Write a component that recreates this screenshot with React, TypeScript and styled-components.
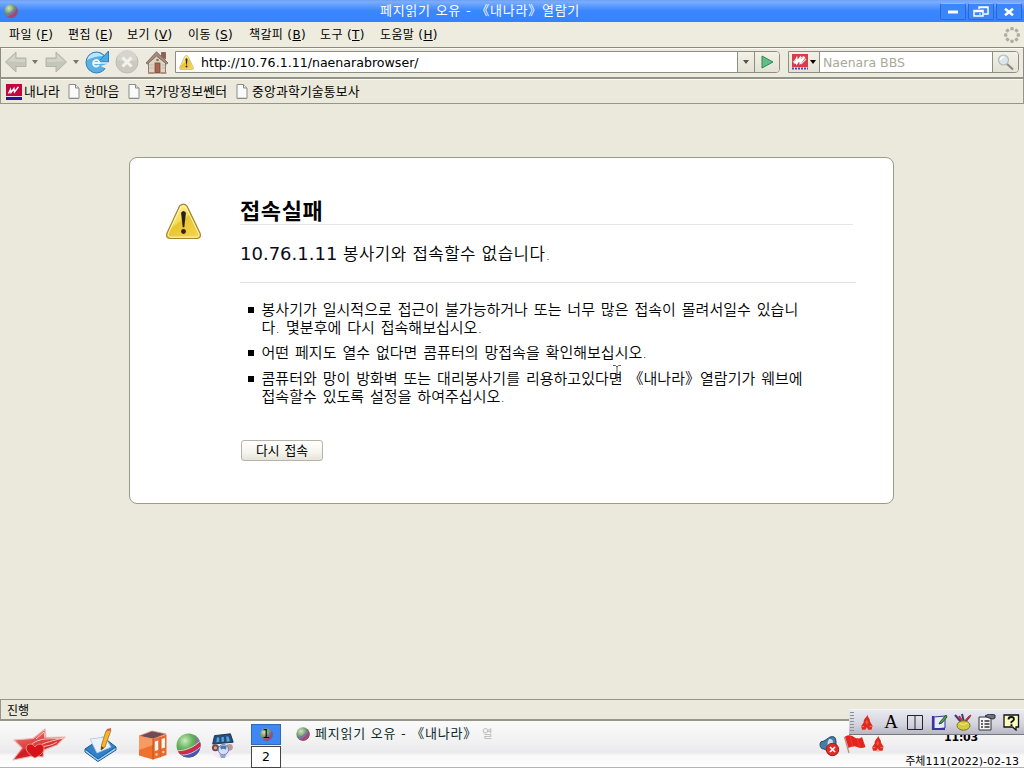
import React from "react";
import styled, { createGlobalStyle } from "styled-components";

const Global = createGlobalStyle`
  * { box-sizing: border-box; }
  body { margin: 0; overflow: hidden; }
  svg { display: block; flex: none; }
`;

const sans = `"DejaVu Sans", "Noto Sans CJK KR", sans-serif`;

const Screen = styled.div`
  position: relative;
  width: 1024px;
  height: 768px;
  display: flex;
  flex-direction: column;
  background: #ebe9db;
  color: #000;
  font: 12px/1 ${sans};
  white-space: pre;
  overflow: hidden;
`;

const Label = styled.span<{ $size?: number; $ls?: number; $ws?: number }>`
  font-size: ${(p) => p.$size ?? 12}px;
  letter-spacing: ${(p) => p.$ls ?? 0}px;
  word-spacing: ${(p) => p.$ws ?? 0}px;
  line-height: 18px;
`;

/* Title bar */
const TitleBar = styled.header`
  height: 22px;
  flex: none;
  display: grid;
  grid-template-columns: 16px 1fr 84px;
  align-items: center;
  padding-left: 4px;
  background: linear-gradient(#6f9ff0 0, #79adff 2px, #5b9aff 6px, #3a86fd 11px, #3583fc 100%);
`;
const Title = styled.h1`
  margin: 0;
  text-align: center;
  color: #fff;
  font: 400 13px/20px ${sans};
  letter-spacing: 0.75px;
`;
const WindowButtons = styled.div`
  display: flex;
  gap: 2px;
  align-self: end;
`;
const WindowButton = styled.button`
  width: 26px;
  height: 17px;
  margin: 0 0 2px;
  padding: 0;
  display: grid;
  place-items: center;
  border: 1px solid #2a68d4;
  border-top-color: #8db8ff;
  border-radius: 2px;
  background: #3b86fb;
`;

/* Menu bar */
const MenuBar = styled.nav`
  height: 25px;
  flex: none;
  display: flex;
  align-items: center;
  padding: 1px 4px 0 9px;
  background: #eeecdf;
`;
const MenuItem = styled.span<{ $w: number }>`
  width: ${(p) => p.$w}px;
  font-size: 12px;
  line-height: 18px;
  letter-spacing: 0.35px;
`;
const Spacer = styled.div`
  flex: 1;
`;

/* Navigation toolbar */
const Toolbar = styled.div`
  height: 32px;
  flex: none;
  display: flex;
  align-items: center;
  padding: 0 4px 2px 1px;
  border: 1px solid #8c8b82;
  border-bottom: 2px solid #94938a;
  background: #edebdf;
  box-shadow: inset 0 1px #fbfaf4;
`;
const Tool = styled.div<{ $w: number }>`
  width: ${(p) => p.$w}px;
  flex: none;
  display: grid;
  place-items: center;
`;
const Field = styled.div<{ $w: number }>`
  width: ${(p) => p.$w}px;
  height: 22px;
  margin-top: 1px;
  display: flex;
  flex: none;
  border: 1px solid #8e8d82;
  border-radius: 0 4px 4px 0;
  background: #fff;
  overflow: hidden;
`;
const FieldText = styled.div<{ $muted?: boolean; $pad: number }>`
  flex: 1;
  display: flex;
  align-items: center;
  gap: 7px;
  padding: 1px 0 0 ${(p) => p.$pad}px;
  color: ${(p) => (p.$muted ? "#a9a997" : "#000")};
`;
const FieldButton = styled.div<{ $w: number; $right?: boolean }>`
  width: ${(p) => p.$w}px;
  display: flex;
  align-items: center;
  justify-content: center;
  gap: 2px;
  background: linear-gradient(#f3f1e8, #e4e2d4);
  border-left: ${(p) => (p.$right ? "0" : "1px solid #8e8d82")};
  border-right: ${(p) => (p.$right ? "1px solid #8e8d82" : "0")};
`;

/* Bookmarks bar */
const Bookmarks = styled.div`
  height: 25px;
  flex: none;
  display: flex;
  align-items: center;
  padding: 1px 5px 0;
  border: 1px solid #96958b;
  border-top: 0;
  background: #ebe9db;
  box-shadow: inset 0 1px #fbfaf4;
`;
const Bookmark = styled.div<{ $w: number; $gap?: number }>`
  width: ${(p) => p.$w}px;
  display: flex;
  align-items: center;
  gap: ${(p) => p.$gap ?? 4}px;
  ${Label} {
    padding-top: 1px;
  }
`;

/* Error page */
const Page = styled.main`
  flex: 1;
  padding: 53px 130px 0 129px;
`;
const Card = styled.section`
  height: 347px;
  display: grid;
  grid-template-columns: 110px 1fr;
  padding: 0 37px 0 0;
  border: 1px solid #9b9b8a;
  border-radius: 8px;
  background: #fff;
`;
const CardIcon = styled.div`
  padding: 45px 0 0 35px;
`;
const CardBody = styled.div`
  display: flex;
  flex-direction: column;
  align-items: flex-start;
`;
const Heading = styled.h2`
  width: 613px;
  height: 67px;
  margin: 0;
  padding-top: 36px;
  border-bottom: 1px solid #e6e6e2;
  font: 700 22px/30px "Noto Sans CJK KR", sans-serif;
  letter-spacing: 0.6px;
`;
const Summary = styled.p`
  width: 616px;
  height: 58px;
  margin: 0;
  padding-top: 16px;
  border-bottom: 1px solid #e2e2e2;
  color: #0a0a1c;
  font-size: 18px;
  line-height: 26px;
`;
const Light = styled.span`
  color: #000;
  font-size: 16.8px;
  font-weight: 350;
  letter-spacing: 0.45px;
`;
const List = styled.ul`
  margin: 0;
  padding: 18px 0 0 8px;
  list-style: none;
  display: flex;
  flex-direction: column;
`;
const Item = styled.li<{ $after?: number }>`
  display: flex;
  gap: 7.5px;
  margin-bottom: ${(p) => p.$after ?? 0}px;
  font-size: 15px;
  font-weight: 350;
  line-height: 18px;
  letter-spacing: 0.02px;
  word-spacing: 1.1px;
  &::before {
    content: "";
    width: 6px;
    height: 6px;
    margin-top: 6px;
    background: #000;
  }
`;
const Retry = styled.button`
  width: 82px;
  height: 21px;
  margin: 34px 0 0 1px;
  padding: 0;
  border: 1px solid #b4b4a8;
  border-radius: 3px;
  background: linear-gradient(#fff, #f5f4ee 60%, #e6e4d8);
  color: #000;
  font: 400 12.8px/18px ${sans};
  word-spacing: 1px;
`;

const StatusBar = styled.footer`
  height: 22px;
  flex: none;
  padding: 2px 0 0 6px;
  border: 1px solid #96958c;
  border-bottom-width: 2px;
  border-right: 0;
  background: #ebe9db;
`;

/* Desktop panel */
const Taskbar = styled.div`
  height: 47px;
  flex: none;
  display: flex;
  padding-left: 8px;
  border-bottom: 1px solid #b4b4b8;
  background: linear-gradient(#fafafa 0, #f1f1f2 45%, #eaeaec 68%, #f8f8f8 75%, #fefefe 100%);
`;
const Launcher = styled.div<{ $w: number }>`
  width: ${(p) => p.$w}px;
  padding-top: 2px;
  display: grid;
  place-items: center;
`;
const Pager = styled.div`
  width: 30px;
  margin: 3px 0 0 10px;
  display: grid;
  grid-template-rows: 21px 22px;
  gap: 1px;
`;
const Desk = styled.div<{ $active?: boolean }>`
  display: grid;
  place-items: center;
  background: ${(p) => (p.$active ? "#3f87f5" : "#fff")};
  border: 1px solid ${(p) => (p.$active ? "#3268b8" : "#444")};
  font-size: 12.5px;
`;
const Stack = styled.div`
  display: grid;
  place-items: center;
  & > * { grid-area: 1 / 1; }
`;
const Task = styled.div`
  height: 26px;
  margin-left: 15px;
  display: flex;
  align-items: center;
  gap: 5px;
  color: #0b2b2b;
`;
const Faded = styled.span`
  color: #b9b9b9;
  font-size: 11.5px;
`;
const Tray = styled.div`
  display: flex;
  align-items: flex-start;
  padding: 14px 0 0;
`;
const Clock = styled.div`
  width: 139px;
  display: flex;
  flex-direction: column;
  align-items: flex-end;
  padding: 8px 5px 0 0;
`;
const Time = styled.b`
  margin-right: 41px;
  font-size: 11px;
  line-height: 18px;
  letter-spacing: -0.2px;
`;
const DateText = styled.span`
  margin-top: 6px;
  font-size: 11px;
  line-height: 18px;
`;

const InputBar = styled.div`
  position: absolute;
  left: 849px;
  top: 709px;
  width: 175px;
  height: 26px;
  display: grid;
  grid-template-columns: 6px repeat(7, 24px);
  place-items: center;
  border-bottom: 1px solid #77777f;
  border-top: 1px solid #f4f4f6;
  background: linear-gradient(#e9e9f0, #d4d4df 60%, #b7b7c4);
`;
const Letter = styled.span`
  font: 19px/20px "Liberation Serif", serif;
`;
const Grip = styled.div`
  width: 4px;
  height: 20px;
  background: repeating-linear-gradient(#8d8d96 0 1px, transparent 1px 3px);
`;
const Cursor = styled.div`
  position: absolute;
  left: 612px;
  top: 365px;
`;

const Orb = () => (
  <svg width="25" height="25" viewBox="0 0 24 24">
    <defs>
      <radialGradient id="orbDock" cx=".35" cy=".3" r=".8">
        <stop offset="0" stopColor="#c9ecc0" />
        <stop offset=".4" stopColor="#6ab65e" />
        <stop offset="1" stopColor="#2d6e3d" />
      </radialGradient>
      <clipPath id="orbClip"><circle cx="12" cy="12" r="11.500" /></clipPath>
    </defs>
    <circle cx="12" cy="12" r="11.500" fill="url(#orbDock)" />
    <g clipPath="url(#orbClip)">
      <path d="M15 -1Q22 4 17 13L25 10V-1Z" fill="#7c7aa8" opacity=".8" />
      <path d="M0 18C9 18 18 14 25 8V26H0Z" fill="#4a54ae" />
      <path d="M1 17.500C9 18 18 14 24 8L25 11C19 18 10 21.500 3 20.500Z" fill="#d72746" />
      <path d="M1 17C9 17.500 18 13 24 7M3 21C11 22 20 18 25 11.500" stroke="#f1d6e0" strokeWidth=".8" fill="none" />
    </g>
  </svg>
);

const TitleOrb = ({ s, id }: { s: number; id: string }) => (
  <svg width={s} height={s} viewBox="0 0 24 24">
    <defs>
      <radialGradient id={id} cx=".35" cy=".3" r=".8">
        <stop offset="0" stopColor="#d2e4c7" />
        <stop offset=".45" stopColor="#78a26c" />
        <stop offset="1" stopColor="#405b48" />
      </radialGradient>
    </defs>
    <circle cx="12" cy="12" r="11.500" fill={`url(#${id})`} />
    <path d="M5 21C12 20 20 13 21.500 6C28 16 16 29 5 21Z" fill="#a4496f" />
    <path d="M3 17C11 17 17 11 19 4L21.500 6C20 14 12 20 5 21Z" fill="#7c76a6" />
  </svg>
);

const Warning = ({ s, id }: { s: number; id: string }) => (
  <svg width={s} height={s} viewBox="0 0 38 38">
    <defs>
      <linearGradient id={id} x1="0" y1="0" x2=".7" y2="1">
        <stop offset="0" stopColor="#fff6b4" />
        <stop offset=".5" stopColor="#f5dc58" />
        <stop offset=".55" stopColor="#e8c52f" />
        <stop offset="1" stopColor="#f3d24c" />
      </linearGradient>
    </defs>
    <path d="M15 3Q19 -.5 22.500 3L36 31Q37.500 36 33 36.500H5Q.5 36 2 31Z" fill={`url(#${id})`} stroke="#a8842b" strokeWidth="1.200" />
    <path d="M16 4.500Q19 1.800 21.500 4.500L34.500 31Q35.500 34.500 32 35H6Q2.500 34.500 3.500 31Z" fill="none" stroke="#fff6c0" strokeWidth="1" />
    <path d="M16.500 10Q19 6.500 21.500 10L19.800 25H18.200Z" fill="#2c1f16" />
    <circle cx="19" cy="29.300" r="2.500" fill="#3b1f16" />
  </svg>
);

const Caret = ({ c = "#77766d" }: { c?: string }) => (
  <svg width="6" height="4" viewBox="0 0 6 4"><path d="M0 0h6L3 4z" fill={c} /></svg>
);

const Arrow = ({ flip }: { flip?: boolean }) => (
  <svg width="24" height="24" viewBox="0 0 24 24">
    <g transform={flip ? "translate(24 0) scale(-1 1)" : undefined}>
      <path d="M1.500 12L12 2V8H22V16.500H12V22Z" fill="#c6c5ba" stroke="#b5b4a9" strokeLinejoin="round" />
      <path d="M3.500 11.500L11 4.500V9.300H21V12Z" fill="#d5d4ca" />
    </g>
  </svg>
);

const Reload = () => (
  <svg width="26" height="26" viewBox="0 0 26 26">
    <circle cx="12.500" cy="13.500" r="10.500" fill="#59b0e2" stroke="#2c7dbc" />
    <path d="M3 11Q5 4 12.500 3.800Q17 4 19.500 7Q11 7 3 11Z" fill="#bfe4f7" />
    <path d="M16.500 17L24.500 14.500L23 20Z" fill="#edebdf" />
    <path d="M24.500 2V13H14L17.500 9.500Z" fill="#4ea9df" stroke="#2c7dbc" strokeLinejoin="round" />
    <path d="M9.500 14H15.500A3.200 3.200 0 1 0 15 16" fill="none" stroke="#e9f6fd" strokeWidth="1.900" />
    <path d="M13.500 14H24" stroke="#e9f6fd" strokeWidth="1.400" />
  </svg>
);

const Stop = () => (
  <svg width="24" height="24" viewBox="0 0 24 24">
    <circle cx="12" cy="12" r="11" fill="#cbcac2" stroke="#bdbcb3" />
    <path d="M2 10A10 10 0 0 1 22 10Q12 13 2 10" fill="#d6d5cd" />
    <path d="M7.500 7.500l9 9M16.500 7.500l-9 9" stroke="#f3f2ed" strokeWidth="3" />
  </svg>
);

const Home = () => (
  <svg width="24" height="24" viewBox="0 0 24 24">
    <path d="M16.500 2.500h4V9l-4-3z" fill="#926156" stroke="#704a42" strokeWidth=".7" />
    <path d="M3.500 12L11.500 4L20.500 12V23H3.500Z" fill="#ded5c5" stroke="#8e7c6e" />
    <path d="M1 13L11.500 1.800L23 13L21.500 14L11.500 6L2.500 14Z" fill="#a88a7c" stroke="#755c50" strokeWidth=".8" />
    <rect x="10" y="13" width="5" height="9.500" fill="#a8654f" stroke="#7d4a3b" strokeWidth=".8" />
    <circle cx="12.500" cy="10" r="1.300" fill="#83715f" />
    <path d="M4.500 15h4M4.500 18h4M16.500 15h3.500M16.500 18h3.500" stroke="#c4b5a3" />
    <path d="M3 23h6M16 23h5.500" stroke="#b58476" strokeWidth="1.500" />
  </svg>
);

const Doc = () => (
  <svg width="12" height="15" viewBox="0 0 12 15">
    <path d="M1 .5H7.500L11 4V14.500H1Z" fill="#fafafa" stroke="#8b8b88" />
    <path d="M7.500 .5V4H11" fill="#ddd" stroke="#8b8b88" />
    <path d="M2 13.500h8.500" stroke="#d8d8d8" />
  </svg>
);

const Naenara = ({ soft }: { soft?: boolean }) => (
  <svg width="16" height="16" viewBox="0 0 16 16">
    <rect width="16" height="13" fill={soft ? "#d33f48" : "#c3063f"} />
    <rect y="13" width="16" height="3" fill={soft ? "#e8e4f0" : "#2412a0"} />
    {!soft && <path d="M0 12.500H16" stroke="#f2dbe6" />}
    {soft && <path d="M0 14.500H16" stroke="#4b4994" strokeWidth="2" strokeDasharray="2 1" />}
    <path d="M2.500 9.500L4.500 5.500L5 8.500L8 4.500L8.500 8L12.500 2.800" stroke="#fff" strokeWidth={soft ? 2.4 : 1.4} fill="none" />
    {soft && <path d="M1 8l3-2M9 10l5-5M11 3l-3 1" stroke="#ecd8d8" strokeWidth="1.200" />}
  </svg>
);

const Throbber = () => (
  <svg width="16" height="16" viewBox="0 0 16 16">
    {[0, 45, 90, 135, 180, 225, 270, 315].map((a) => (
      <rect key={a} x="6.300" y=".1" width="3.400" height="3.200" rx=".8" fill="#aeada3" transform={`rotate(${a} 8 8)`} />
    ))}
  </svg>
);

const Flame = ({ s = 16 }: { s?: number }) => (
  <svg width={s * 0.8} height={s} viewBox="0 0 13 16">
    <path d="M7 0C7 3 10 4 9.500 7L12 11L11 15H2L1 11.500L3.500 8C3 4 7 3 7 0Z" fill="#dc2a1e" />
    <path d="M6.500 5L8 8L6.500 10.500L5 8Z" fill="#f0523c" />
    <path d="M5 15L6.500 12.500L8 15V16H5Z" fill="#f3b0a2" />
    <path d="M1 11.500L4 12M12 11.500L9 12" stroke="#f59580" strokeWidth=".7" />
  </svg>
);

const RedStar = () => (
  <svg width="56" height="34" viewBox="0 0 56 34">
    <defs>
      <linearGradient id="star" x2=".5" y2="1">
        <stop offset="0" stopColor="#f08a86" /><stop offset=".5" stopColor="#df4746" /><stop offset="1" stopColor="#c20b12" />
      </linearGradient>
    </defs>
    <path d="M3 12L22 10.500L34 1L35 9.500L54 9L46 17L33 22L32 29L22 28L2 32L11 20Z" fill="url(#star)" stroke="#efb5ae" strokeWidth="1.200" strokeLinejoin="round" />
    <path d="M25 11L33 4L34 10M19 18C28 8 40 12 52 10C42 13 34 14 28 18M30 19C36 18 42 17 46 14" stroke="#fbd0cb" strokeWidth=".9" fill="none" />
    <path d="M15 19C17 15 22 15 24 19C26 15 33 15 33 20C33 25 28 28 24 30C20 28 15 24 15 19Z" fill="#d5141a" stroke="#f2a097" strokeWidth=".8" />
    <path d="M5 29L14 21L17 27Z" fill="#cf1d22" />
  </svg>
);

const Notes = () => (
  <svg width="34" height="34" viewBox="0 0 34 34">
    <path d="M1 21L19 9L32 19L14 31Z" fill="#3181ca" stroke="#1b5698" />
    <path d="M1 21V24L14 33.500L32 22V19L14 31Z" fill="#9fd0ee" stroke="#1d5c9c" />
    <path d="M6 11L21 9L27 19L13 25Z" fill="#e9f2fc" stroke="#a9c6e2" strokeWidth=".8" />
    <path d="M22 3L27 2L21 19L17 22L17.500 17Z" fill="#f6b52c" stroke="#a66d13" strokeWidth=".8" />
    <path d="M22 3L23 1L27 0V2Z" fill="#d9644d" />
    <path d="M17.500 18L17 22L20 20Z" fill="#4c3a20" />
  </svg>
);

const Binders = () => (
  <svg width="30" height="30" viewBox="0 0 30 30">
    <path d="M1 6L14 1L28 4L15 9Z" fill="#6f4a58" stroke="#e08a60" strokeWidth=".8" />
    <path d="M1 6L15 9V29.500L1 25.500Z" fill="#f0702f" />
    <path d="M1 6L15 9V15L1 20Z" fill="#f79a63" />
    <path d="M15 9L21.500 7V27.500L15 29.500Z" fill="#ee6c2c" />
    <path d="M22 7L28.500 4.500V25L22 27.300Z" fill="#e9692f" />
    <path d="M16.800 11.500L20.200 10.500V20L16.800 21ZM23.600 9L27 8V17.500L23.600 18.500Z" fill="#fff6ee" />
    <circle cx="18.500" cy="24.500" r="1.200" fill="#fbc9a2" /><circle cx="25.300" cy="22" r="1.200" fill="#fbc9a2" />
    <path d="M15 9V29.500M21.800 7V27.500" stroke="#b94c1c" strokeWidth=".9" />
  </svg>
);

const Robot = () => (
  <svg width="28" height="32" viewBox="0 0 30 32">
    <circle cx="15" cy="18" r="12.500" fill="#f5e7f4" />
    <path d="M7 6L24 4L27 13L5 15Z" fill="#244f7b" stroke="#152f4d" strokeLinejoin="round" />
    <path d="M9.500 8h2.500v4.500l-3 .5zM14.500 7.500h2.500v5h-2.500zM19.500 7h2.500l1.500 5-3.500 .5z" fill="#5ca3dc" />
    <circle cx="8" cy="19" r="3.800" fill="#6b4c50" /><circle cx="23" cy="18.500" r="3.600" fill="#b59a98" />
    <circle cx="8" cy="19" r="1.700" fill="#d9a98b" />
    <circle cx="16.500" cy="21" r="5.500" fill="#d4def4" stroke="#5f7ca8" />
    <path d="M13 18Q16.500 15 20 18L19 21Q16 19 14 21Z" fill="#4d75b1" />
    <path d="M12 25Q16 29 20 25L18 30H14Z" fill="#8ba3cd" />
  </svg>
);

const Speaker = () => (
  <svg width="21" height="22" viewBox="0 0 21 22">
    <path d="M1 9Q1 6 5 6L11 2Q17 0 17 7V12L11 17L5 14Q1 14 1 9Z" fill="#447da6" stroke="#254a67" />
    <path d="M10 4Q15 3 14 10L10 15Q7 9 10 4Z" fill="#c6dded" />
    <circle cx="13.500" cy="14.500" r="6.200" fill="#d92f2c" stroke="#ad1513" />
    <path d="M11 12l5 5M16 12l-5 5" stroke="#fff" strokeWidth="1.700" />
  </svg>
);

const Flag = () => (
  <svg width="23" height="19" viewBox="0 0 23 19">
    <path d="M1.500 2L6 18" stroke="#be8e7c" strokeWidth="1.300" />
    <path d="M2 1.500Q7 -1 11 2T19 2L22.500 12Q18 14 14 12T5.500 13Z" fill="#e5231c" />
    <path d="M7 1.500L10 12M14 3L17 12.500" stroke="#ee3c30" />
  </svg>
);

const menus: [string, string, number][] = [
  ["파일", "F", 59], ["편집", "E", 59], ["보기", "V", 61], ["이동", "S", 61],
  ["책갈피", "B", 71], ["도구", "T", 60], ["도움말", "H", 70],
];

export default function App() {
  return (
    <Screen>
      <Global />
      <TitleBar>
        <TitleOrb s={14} id="orbTitle" />
        <Title>페지읽기 오유 - 《내나라》열람기</Title>
        <WindowButtons>
          <WindowButton><svg width="10" height="4"><path d="M0 .5h10v3H0z" fill="#fff" /></svg></WindowButton>
          <WindowButton>
            <svg width="16" height="11" viewBox="0 0 16 11" fill="none" stroke="#fff">
              <path d="M6 3V1H15V8H11M6 1.500H15" strokeWidth="1.500" />
              <path d="M1 4.500H10V10H1ZM1 5.500H10" strokeWidth="1.500" /><path d="M6 8h2" />
            </svg>
          </WindowButton>
          <WindowButton><svg width="10" height="8" viewBox="0 0 10 8"><path d="M1 .7L9 7.300M9 .7L1 7.300" stroke="#fff" strokeWidth="2.500" /></svg></WindowButton>
        </WindowButtons>
      </TitleBar>

      <MenuBar>
        {menus.map(([name, key, w]) => (
          <MenuItem key={key} $w={w}>{name} (<u>{key}</u>)</MenuItem>
        ))}
        <Spacer />
        <Throbber />
      </MenuBar>

      <Toolbar>
        <Tool $w={27}><Arrow /></Tool>
        <Tool $w={12}><Caret /></Tool>
        <Tool $w={29}><Arrow flip /></Tool>
        <Tool $w={12}><Caret /></Tool>
        <Tool $w={30}><Reload /></Tool>
        <Tool $w={30}><Stop /></Tool>
        <Tool $w={30}><Home /></Tool>
        <Tool $w={3} />
        <Field $w={605}>
          <FieldText $pad={3}>
            <Warning s={15} id="warnSmall" />
            <Label $size={12.6}>http://10.76.1.11/naenarabrowser/</Label>
          </FieldText>
          <FieldButton $w={17}><Caret c="#55544d" /></FieldButton>
          <FieldButton $w={25}>
            <svg width="13" height="14" viewBox="0 0 13 14"><path d="M1 1L12 7L1 13Z" fill="#62bd87" stroke="#2e8753" /></svg>
          </FieldButton>
        </Field>
        <Tool $w={8} />
        <Field $w={231}>
          <FieldButton $w={31} $right><Naenara soft /><Caret c="#000" /></FieldButton>
          <FieldText $pad={3} $muted><Label $size={12.5}>Naenara BBS</Label></FieldText>
          <FieldButton $w={26}>
            <svg width="18" height="17" viewBox="0 0 18 17">
              <path d="M9.500 9.500L16 15.500" stroke="#8b8b86" strokeWidth="2.200" />
              <circle cx="6.500" cy="6" r="5" fill="#dce6ea" stroke="#b5babb" strokeWidth="1.200" />
              <path d="M3.500 6Q4 3 7 3" stroke="#fff" strokeWidth="1.500" fill="none" />
            </svg>
          </FieldButton>
        </Field>
      </Toolbar>

      <Bookmarks>
        <Bookmark $w={62} $gap={2}><Naenara /><Label $size={12.8} $ls={0.2}>내나라</Label></Bookmark>
        <Bookmark $w={60}><Doc /><Label $size={12.8}>한마음</Label></Bookmark>
        <Bookmark $w={108}><Doc /><Label $size={12.8} $ls={0.1}>국가망정보쎈터</Label></Bookmark>
        <Bookmark $w={140}><Doc /><Label $size={12.8} $ls={0.2}>중앙과학기술통보사</Label></Bookmark>
      </Bookmarks>

      <Page>
        <Card>
          <CardIcon><Warning s={37} id="warnLarge" /></CardIcon>
          <CardBody>
            <Heading>접속실패</Heading>
            <Summary>10.76.1.11 <Light>봉사기와 접속할수 없습니다.</Light></Summary>
            <List>
              <Item $after={7}>{"봉사기가 일시적으로 접근이 불가능하거나 또는 너무 많은 접속이 몰려서일수 있습니\n다. 몇분후에 다시 접속해보십시오."}</Item>
              <Item $after={8}>어떤 페지도 열수 없다면 콤퓨터의 망접속을 확인해보십시오.</Item>
              <Item>{"콤퓨터와 망이 방화벽 또는 대리봉사기를 리용하고있다면 《내나라》열람기가 웨브에\n접속할수 있도록 설정을 하여주십시오."}</Item>
            </List>
            <Retry>다시 접속</Retry>
          </CardBody>
        </Card>
      </Page>

      <StatusBar><Label>진행</Label></StatusBar>

      <Taskbar>
        <Launcher $w={62}><RedStar /></Launcher>
        <Launcher $w={62}><Notes /></Launcher>
        <Launcher $w={42}><Binders /></Launcher>
        <Launcher $w={29}><Orb /></Launcher>
        <Launcher $w={38}><Robot /></Launcher>
        <Pager>
          <Desk $active><Stack><TitleOrb s={13} id="orbPager" /><span>1</span></Stack></Desk>
          <Desk>2</Desk>
        </Pager>
        <Task>
          <TitleOrb s={14} id="orbTask" />
          <Label $size={13} $ls={0.75}>페지읽기 오유 - 《내나라》 <Faded>열</Faded></Label>
        </Task>
        <Spacer />
        <Tray><Speaker /><Tool $w={3} /><Flag /><Tool $w={5} /><Flame s={17} /></Tray>
        <Clock>
          <Time>11:03</Time>
          <DateText>주체111(2022)-02-13</DateText>
        </Clock>
      </Taskbar>

      <InputBar>
        <Grip />
        <Flame s={17} />
        <Letter>A</Letter>
        <svg width="16" height="15"><path d="M.5 .5h15v14H.5zM8 .5v14" fill="none" stroke="#22222a" /></svg>
        <svg width="17" height="17" viewBox="0 0 17 17">
          <path d="M3 3L14 2V14L3 15Z" fill="#e9e9fa" stroke="#33339c" />
          <path d="M2 2V15H14" fill="none" stroke="#35359f" strokeWidth="2.200" />
          <path d="M15 1L9 8L8 10L11 9L16 3Z" fill="#5ba24d" stroke="#22592b" />
        </svg>
        <svg width="18" height="18" viewBox="0 0 18 18">
          <path d="M7 9L1 2M10 9L8 1M11 9L16 3" stroke="#3d3b77" strokeWidth="2" />
          <path d="M8 8L5 3" stroke="#c72d2d" strokeWidth="2" /><path d="M11 8L17 2" stroke="#d72c2c" strokeWidth="1.500" />
          <ellipse cx="9.500" cy="12.500" rx="6.500" ry="4.700" fill="#d3cb40" stroke="#817716" />
          <path d="M5.500 10.500Q9.500 13 13.500 10" stroke="#f1eb9a" fill="none" />
        </svg>
        <svg width="18" height="17" viewBox="0 0 18 17">
          <path d="M1 3H13V16H1Z" fill="#f7f7f7" stroke="#33333a" />
          <path d="M3 7h2M6.500 7h5M3 10h2M6.500 10h5M3 13h2M6.500 13h5" stroke="#33333a" strokeWidth="1.300" />
          <path d="M7 2L11 0L17 1V4L15 5L11 4Z" fill="#707086" stroke="#2e2e39" />
        </svg>
        <svg width="17" height="17" viewBox="0 0 17 17">
          <path d="M1 1H15.500V13H13V16L9.500 13H1Z" fill="#fffbc0" stroke="#111" strokeWidth="1.300" />
          <path d="M5.500 5.500Q5.500 3 8.200 3T11 5.300Q11 6.500 8.400 8V9.200" fill="none" stroke="#111" strokeWidth="1.800" />
          <path d="M7.500 10.300h1.900v1.700H7.500z" />
        </svg>
      </InputBar>

      <Cursor>
        <svg width="10" height="17" viewBox="0 0 10 17">
          <path d="M1 .5H3.500L5 2L6.500 .5H9M5 2V15M1 16.500H3.500L5 15L6.500 16.500H9" fill="none" stroke="#555" />
        </svg>
      </Cursor>
    </Screen>
  );
}
